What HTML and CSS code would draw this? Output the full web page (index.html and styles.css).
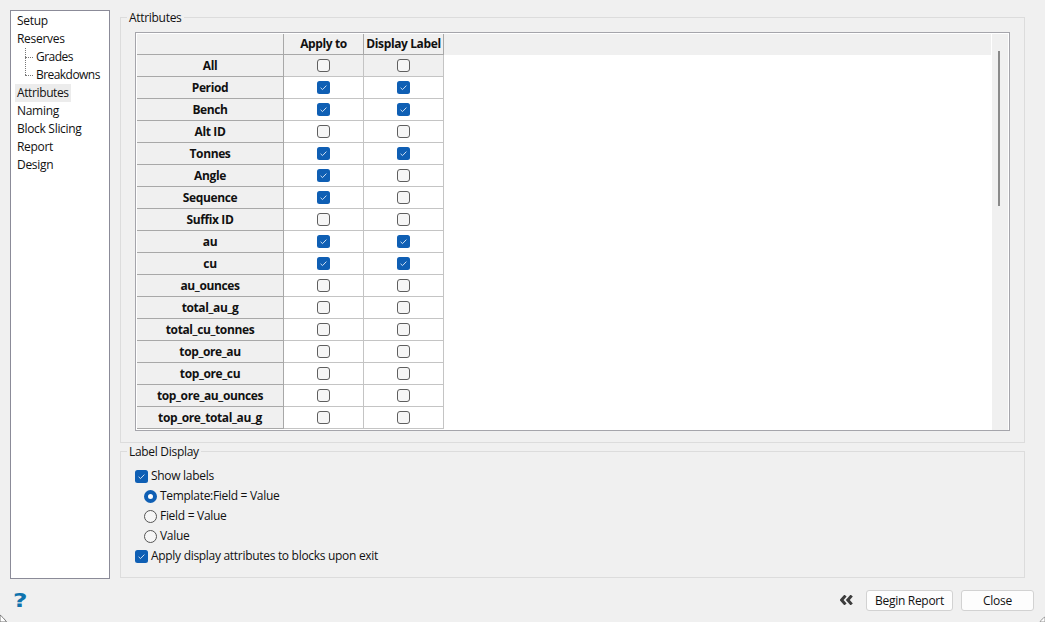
FILE: index.html
```html
<!DOCTYPE html>
<html lang="en">
<head>
<meta charset="utf-8">
<title>Reserves</title>
<link rel="stylesheet" href="styles.css">
</head>
<body>
<svg class="defs" width="0" height="0" aria-hidden="true">
  <symbol id="chk" viewBox="0 0 13 13"><rect x="0" y="0" width="13" height="13" rx="2.5" fill="#0f5fb4"/><path d="M3.6 6.8 5.5 8.6 9.4 4.6" fill="none" stroke="#cfe0f2" stroke-width="1"/></symbol>
  <symbol id="unc" viewBox="0 0 13 13"><rect x=".5" y=".5" width="12" height="12" rx="2.5" fill="#f6f6f6" stroke="#5f5f5f" stroke-width="1"/></symbol>
</svg>
<div class="main">
  <nav class="tree">
    <div class="item">Setup</div>
    <div class="item">Reserves</div>
    <div class="item child first">Grades</div>
    <div class="item child last">Breakdowns</div>
    <div class="item"><span class="sel">Attributes</span></div>
    <div class="item">Naming</div>
    <div class="item">Block Slicing</div>
    <div class="item">Report</div>
    <div class="item">Design</div>
  </nav>
  <div class="panels">
    <section class="group attrs">
      <div class="legend">Attributes</div>
      <div class="tablebox">
        <div class="grid">
          <div class="row head"><div class="rh"></div><div class="ch">Apply to</div><div class="ch">Display Label</div></div>
          <div class="row all"><div class="rh">All</div><div class="c"><svg class="b"><use href="#unc"/></svg></div><div class="c"><svg class="b"><use href="#unc"/></svg></div></div>
          <div class="row"><div class="rh">Period</div><div class="c"><svg class="b"><use href="#chk"/></svg></div><div class="c"><svg class="b"><use href="#chk"/></svg></div></div>
          <div class="row"><div class="rh">Bench</div><div class="c"><svg class="b"><use href="#chk"/></svg></div><div class="c"><svg class="b"><use href="#chk"/></svg></div></div>
          <div class="row"><div class="rh">Alt ID</div><div class="c"><svg class="b"><use href="#unc"/></svg></div><div class="c"><svg class="b"><use href="#unc"/></svg></div></div>
          <div class="row"><div class="rh">Tonnes</div><div class="c"><svg class="b"><use href="#chk"/></svg></div><div class="c"><svg class="b"><use href="#chk"/></svg></div></div>
          <div class="row"><div class="rh">Angle</div><div class="c"><svg class="b"><use href="#chk"/></svg></div><div class="c"><svg class="b"><use href="#unc"/></svg></div></div>
          <div class="row"><div class="rh">Sequence</div><div class="c"><svg class="b"><use href="#chk"/></svg></div><div class="c"><svg class="b"><use href="#unc"/></svg></div></div>
          <div class="row"><div class="rh">Suffix ID</div><div class="c"><svg class="b"><use href="#unc"/></svg></div><div class="c"><svg class="b"><use href="#unc"/></svg></div></div>
          <div class="row"><div class="rh">au</div><div class="c"><svg class="b"><use href="#chk"/></svg></div><div class="c"><svg class="b"><use href="#chk"/></svg></div></div>
          <div class="row"><div class="rh">cu</div><div class="c"><svg class="b"><use href="#chk"/></svg></div><div class="c"><svg class="b"><use href="#chk"/></svg></div></div>
          <div class="row"><div class="rh">au_ounces</div><div class="c"><svg class="b"><use href="#unc"/></svg></div><div class="c"><svg class="b"><use href="#unc"/></svg></div></div>
          <div class="row"><div class="rh">total_au_g</div><div class="c"><svg class="b"><use href="#unc"/></svg></div><div class="c"><svg class="b"><use href="#unc"/></svg></div></div>
          <div class="row"><div class="rh">total_cu_tonnes</div><div class="c"><svg class="b"><use href="#unc"/></svg></div><div class="c"><svg class="b"><use href="#unc"/></svg></div></div>
          <div class="row"><div class="rh">top_ore_au</div><div class="c"><svg class="b"><use href="#unc"/></svg></div><div class="c"><svg class="b"><use href="#unc"/></svg></div></div>
          <div class="row"><div class="rh">top_ore_cu</div><div class="c"><svg class="b"><use href="#unc"/></svg></div><div class="c"><svg class="b"><use href="#unc"/></svg></div></div>
          <div class="row"><div class="rh">top_ore_au_ounces</div><div class="c"><svg class="b"><use href="#unc"/></svg></div><div class="c"><svg class="b"><use href="#unc"/></svg></div></div>
          <div class="row last"><div class="rh">top_ore_total_au_g</div><div class="c"><svg class="b"><use href="#unc"/></svg></div><div class="c"><svg class="b"><use href="#unc"/></svg></div></div>
        </div>
        <div class="scroll"><div class="thumb"></div></div>
      </div>
    </section>
    <section class="group labels">
      <div class="legend">Label Display</div>
      <div class="opts">
        <div class="opt"><svg class="b"><use href="#chk"/></svg>Show labels</div>
        <div class="opt sub"><span class="radio on"></span>Template:Field = Value</div>
        <div class="opt sub"><span class="radio"></span>Field = Value</div>
        <div class="opt sub"><span class="radio"></span>Value</div>
        <div class="opt"><svg class="b"><use href="#chk"/></svg>Apply display attributes to blocks upon exit</div>
      </div>
    </section>
  </div>
</div>
<footer class="foot">
  <div class="help">?</div>
  <div class="actions">
    <svg class="chev" width="14" height="10" viewBox="0 0 14 10"><path d="M5.5 .6 1.6 5 5.5 9.4M11.7 .6 7.8 5 11.7 9.4" fill="none" stroke="#3c3c3c" stroke-width="3"/></svg>
    <button class="btn wide">Begin Report</button>
    <button class="btn">Close</button>
  </div>
</footer>
<svg class="corner bl" width="8" height="8" viewBox="0 0 8 8" aria-hidden="true"><path d="M0 1C2 2.5 5 5.5 6.5 8H0Z" fill="#fff" stroke="#777" stroke-width="1"/></svg>
<svg class="corner br" width="6" height="6" viewBox="0 0 6 6" aria-hidden="true"><path d="M6 1C4 2 2 4 1 6H6Z" fill="#fff" stroke="#999" stroke-width="1"/></svg>
</body>
</html>
```

FILE: styles.css
```css
* { box-sizing: border-box; }
html, body { margin: 0; height: 100%; }
body {
  width: 1045px; height: 622px; overflow: hidden; position: relative;
  background: #f0f0f0; color: #111;
  font: 12px/18px "Open Sans", "Noto Sans", sans-serif;
  letter-spacing: -0.3px;
  display: flex; flex-direction: column;
  padding: 10px 20px 0 10px;
}
.defs { position: absolute; }
.corner { position: absolute; bottom: 0; }
.corner.bl { left: 0; }
.corner.br { right: 0; }
.main { display: flex; gap: 10px; height: 569px; }
.tree {
  width: 100px; height: 569px; background: #fff;
  border: 1px solid #8b8b98;
  padding: 1px 0 0 6px; flex: none;
}
.item { height: 18px; line-height: 18px; }
.child { padding-left: 19px; position: relative; letter-spacing: -0.55px; }
.child::before {
  content: ""; position: absolute; left: 8px; top: 9px; width: 8px;
  border-top: 1px dotted #777;
}
.child::after {
  content: ""; position: absolute; left: 8px; top: 0; height: 9px;
  border-left: 1px dotted #777;
}
.child.last::after { top: -9px; height: 18px; }
.sel { background: #ececec; display: block; width: 56px; margin-left: -2px; padding-left: 2px; letter-spacing: -0.38px; }
.panels { flex: 1; display: flex; flex-direction: column; padding-top: 7px; gap: 8px; min-width: 0; }
.group { position: relative; border: 1px solid #dcdcdc; padding: 14px 14px 0; }
.attrs { height: 426px; }
.labels { height: 127px; }
.legend {
  position: absolute; left: 6px; top: -9px; background: #f0f0f0;
  padding: 0 2px; line-height: 18px;
}
.tablebox {
  height: 399px; border: 1px solid #a5a5ab; background: #fff;
  padding: 1px 1px 0 1px; display: flex; overflow: hidden;
}
.grid { flex: 1; background: #fff; min-width: 0; }
.row { display: grid; grid-template-columns: 147px 80px 80px; height: 22px; white-space: nowrap; }
.row.head { height: 21px; background: #f0f0f0; }
.rh {
  background: #f0f0f0; font-weight: 700; text-align: center;
  border-right: 1px solid #a8a8a8; border-bottom: 1px solid #a8a8a8;
  line-height: 21px; letter-spacing: -0.38px;
}
.ch {
  font-weight: 700; text-align: center; background: #f0f0f0;
  border-right: 1px solid #a8a8a8; border-bottom: 1px solid #a8a8a8;
  line-height: 20px; letter-spacing: -0.38px;
}
.c {
  display: flex; align-items: center; justify-content: center;
  border-right: 1px solid #c4c4c4; border-bottom: 1px solid #c4c4c4;
}
.all .c { background: #f0f0f0; }
.b { width: 13px; height: 13px; flex: none; }
.scroll { width: 16px; background: #f0f0f0; flex: none; margin-left: 1px; }
.thumb { width: 2px; height: 155px; background: #8a8a8a; margin: 17px 0 0 6px; }
.opts { display: flex; flex-direction: column; }
.opt { height: 20px; display: flex; align-items: center; gap: 3px; }
.sub { padding-left: 9px; gap: 3px; }
.radio {
  width: 13px; height: 13px; border-radius: 50%; border: 1px solid #555; background: #f6f6f6; flex: none;
}
.radio.on { border: 4px solid #0f5fb4; background: #fff; }
.foot { display: flex; justify-content: space-between; align-items: center; height: 43px; padding-bottom: 1px; margin-right: -9px; }
.help {
  font: 900 20px/20px "DejaVu Sans", sans-serif; color: #0f73ad; margin-left: 3px;
  transform: scaleX(1.25); transform-origin: left center;
}
.actions { display: flex; align-items: center; }
.chev { margin-right: 12px; }
.btn {
  height: 21px; width: 73px; padding: 1px 0 0; background: #fdfdfd; color: #111;
  border: 1px solid #d2d2d2; border-radius: 3px;
  font: 12px/18px "Open Sans", "Noto Sans", sans-serif; letter-spacing: -0.3px;
}
.btn.wide { width: 87px; margin-right: 8px; }
```
